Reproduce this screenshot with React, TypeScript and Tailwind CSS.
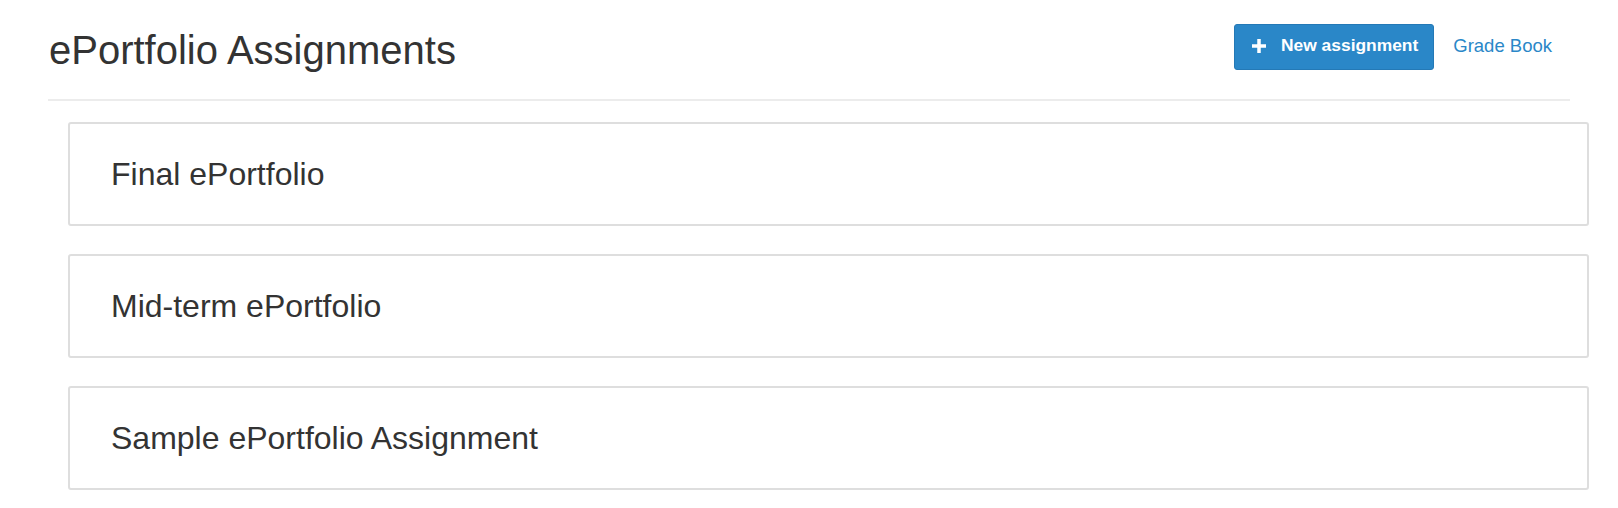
import React from "react";

const assignments = [
  { id: 1, title: "Final ePortfolio" },
  { id: 2, title: "Mid-term ePortfolio" },
  { id: 3, title: "Sample ePortfolio Assignment" },
];

const PlusIcon: React.FC = () => (
  <svg width="14" height="14" viewBox="0 0 14 14" fill="white">
    <rect x="5.25" y="0" width="3.5" height="14" />
    <rect x="0" y="5.25" width="14" height="3.5" />
  </svg>
);

const App: React.FC = () => {
  return (
    <div
      className="min-h-screen bg-white px-[48px] text-[#333]"
      style={{ fontFamily: '"Liberation Sans", Arial, sans-serif' }}
    >
      <div className="flex h-[101px] items-start justify-between border-b-2 border-[#ececec]">
        <h1 className="ml-[1px] mt-[28px] text-[40px] font-normal leading-[44px]">
          ePortfolio Assignments
        </h1>
        <div className="mr-[18px] mt-[24px] flex items-center gap-[19px]">
          <button className="flex h-[46px] items-center gap-[15px] rounded-[3px] border border-[#2479b6] bg-[#2a87c8] pl-[17px] pr-[15px] pb-[3px] text-[17.4px] font-bold text-white">
            <PlusIcon />
            New assignment
          </button>
          <a className="pb-[3px] text-[18.5px] text-[#2a87c8]" href="#">
            Grade Book
          </a>
        </div>
      </div>

      <div className="ml-[20px] mr-[-19px] mt-[21px] flex flex-col gap-[28px]">
        {assignments.map((a) => (
          <div
            key={a.id}
            className="flex h-[104px] items-center rounded-[3px] border-2 border-[#dedede] pl-[41px]"
          >
            <span className="text-[32px] leading-none">{a.title}</span>
          </div>
        ))}
      </div>
    </div>
  );
};

export default App;
